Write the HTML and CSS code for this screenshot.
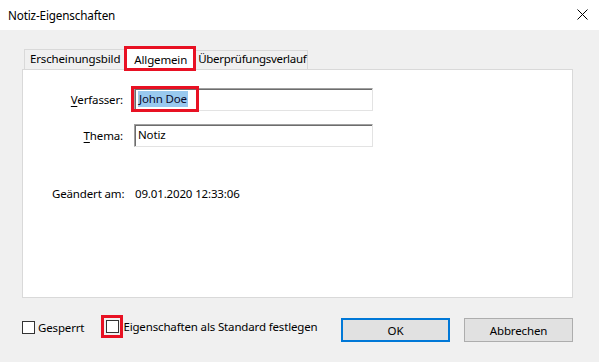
FILE: index.html
```html
<!DOCTYPE html>
<html lang="de">
<head>
    <meta charset="UTF-8">
    <title>Notiz-Eigenschaften</title>
    <link rel="stylesheet" href="styles.css">
</head>
<body>
    <div class="dialog">
        <div class="titlebar">
            <span class="title">Notiz-Eigenschaften</span>
            <svg class="close" width="11" height="11" viewBox="0 0 11 11">
                <path d="M0.5 0.5 L10.5 10.5 M10.5 0.5 L0.5 10.5" stroke="#000" stroke-width="1" fill="none"/>
            </svg>
        </div>

        <div class="content">
            <div class="tabs">
                <div class="tab">Erscheinungsbild</div>
                <div class="tab active">Allgemein</div>
                <div class="tab last">Überprüfungsverlauf</div>
            </div>

            <div class="panel">
                <div class="form">
                    <label class="label"><u>V</u>erfasser:</label>
                    <div class="field">
                        <span class="selected">John Doe</span>
                        <span class="mark"></span>
                    </div>

                    <label class="label"><u>T</u>hema:</label>
                    <div class="field">Notiz</div>

                    <div class="label changed">Geändert am:</div>
                    <div class="value changed">09.01.2020 12:33:06</div>
                </div>
            </div>

            <div class="footer">
                <div class="check">
                    <span class="box"></span>
                    <span>Gesperrt</span>
                </div>
                <div class="check second">
                    <span class="box-mark"><span class="box"></span></span>
                    <span>Eigenschaften als Standard festlegen</span>
                </div>
                <div class="buttons">
                    <button class="btn default">OK</button>
                    <button class="btn">Abbrechen</button>
                </div>
            </div>
        </div>
    </div>
</body>
</html>
```

FILE: styles.css
```css
body {
    margin: 0;
    font-family: "Noto Sans", "Open Sans", sans-serif;
    font-size: 11.5px;
    letter-spacing: -0.15px;
    color: #000;
    background-color: #f0f0f0;
}
.dialog {
    width: 599px;
    height: 362px;
    background-color: #f0f0f0;
    overflow: hidden;
    white-space: nowrap;
}
.titlebar {
    height: 30px;
    background-color: #fff;
    display: flex;
    align-items: center;
    justify-content: space-between;
    padding: 0 11px 0 8px;
}
.title {
    font-size: 11.7px;
}
.close {
    display: block;
    margin-top: -2px;
}
.content {
    padding: 19px 26px 0 22px;
}
.tabs {
    display: flex;
    align-items: flex-end;
    height: 20px;
    padding-left: 2px;
}
.tab {
    box-sizing: border-box;
    height: 20px;
    line-height: 17px;
    padding: 0 5px;
    border: 1px solid #d9d9d9;
    border-bottom: none;
    background-color: #f0f0f0;
}
.tab.active {
    position: relative;
    z-index: 1;
    height: 25px;
    margin-bottom: -2px;
    margin-left: -2px;
    padding: 0 6px 0 7px;
    line-height: 22px;
    background-color: #fff;
    border: 3px solid #e81123;
}
.tab.last {
    height: 19px;
    line-height: 16px;
    padding: 0 1px 0 2px;
    border-left: none;
    letter-spacing: -0.3px;
}
.panel {
    height: 229px;
    box-sizing: border-box;
    background-color: #fff;
    border: 1px solid #d9d9d9;
}
.form {
    display: grid;
    grid-template-columns: 100px 239px;
    column-gap: 11px;
    grid-template-rows: 23px 23px 20px;
    row-gap: 13px;
    padding: 18px 0 0 0;
    align-items: center;
}
.label {
    text-align: right;
}
.label u {
    text-decoration-thickness: 1px;
    text-underline-offset: 2px;
}
.field {
    position: relative;
    box-sizing: border-box;
    height: 23px;
    line-height: 19px;
    padding: 0 3px;
    border: 1px solid;
    border-color: #a0a0a0 #e3e3e3 #e3e3e3 #a0a0a0;
    box-shadow: inset 1px 1px 0 #6d6d6d;
}
.selected {
    display: inline-block;
    background-color: #99c9ef;
    color: #0a0a2a;
    padding: 0 1px;
    line-height: 16px;
    margin-top: 2px;
}
.mark {
    position: absolute;
    left: -4px;
    top: -3px;
    width: 62px;
    height: 20px;
    border: 3px solid #e81123;
}
.changed {
    margin-top: 46px;
}
.label.changed {
    text-align: left;
    padding-left: 29px;
}
.value {
    padding-left: 1px;
}
.footer {
    display: flex;
    align-items: flex-start;
    height: 24px;
    margin-top: 20px;
}
.check {
    display: flex;
    align-items: center;
    gap: 3px;
    margin-top: 2px;
}
.box {
    display: block;
    width: 11px;
    height: 11px;
    background-color: #fff;
    border: 1px solid #333;
}
.check.second {
    margin-left: 17px;
    margin-top: -3px;
    gap: 0;
}
.box-mark {
    display: block;
    padding: 2px 1px 2px 2px;
    border: 3px solid #e81123;
}
.buttons {
    display: flex;
    gap: 14px;
    margin-left: auto;
}
.btn {
    box-sizing: border-box;
    width: 109px;
    height: 24px;
    font-family: inherit;
    font-size: 11.5px;
    letter-spacing: -0.15px;
    color: #000;
    background-color: #e1e1e1;
    border: 1px solid #adadad;
    padding: 0;
}
.btn.default {
    border: 2px solid #0078d7;
}
```
